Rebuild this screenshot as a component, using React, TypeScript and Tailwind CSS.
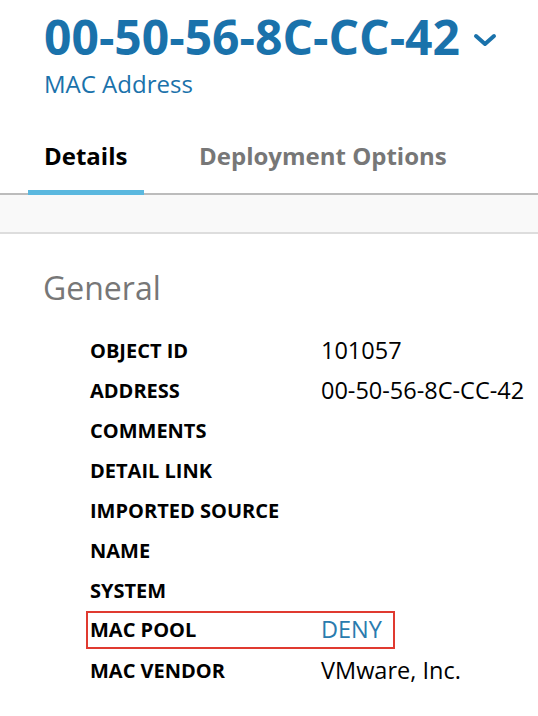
import React from 'react';

const rows: { label: string; value?: string; link?: boolean; highlight?: boolean }[] = [
  { label: 'OBJECT ID', value: '101057' },
  { label: 'ADDRESS', value: '00-50-56-8C-CC-42' },
  { label: 'COMMENTS' },
  { label: 'DETAIL LINK' },
  { label: 'IMPORTED SOURCE' },
  { label: 'NAME' },
  { label: 'SYSTEM' },
  { label: 'MAC POOL', value: 'DENY', link: true, highlight: true },
  { label: 'MAC VENDOR', value: 'VMware, Inc.' },
];

const App: React.FC = () => {
  return (
    <div className="w-[538px] h-[716px] bg-white overflow-hidden font-['Open_Sans',sans-serif]">
      <div className="pl-[44px] pt-[9px]">
        <div className="flex items-center whitespace-nowrap">
          <h1 className="text-[48px] leading-[56px] font-bold text-[#1a72ab]">00-50-56-8C-CC-42</h1>
          <svg className="ml-[13px] mt-[5px]" width="24" height="14" viewBox="0 0 24 14">
            <path d="M3 3 L12 11 L21 3" fill="none" stroke="#1a72ab" strokeWidth="4" strokeLinecap="round" strokeLinejoin="round" />
          </svg>
        </div>
        <div className="mt-[4px] text-[24px] leading-[30px] text-[#1a72ab]">MAC Address</div>
      </div>

      <div className="mt-[42px] flex border-b-2 border-[#bcbcbc]">
        <div className="ml-[28px] w-[116px] flex flex-col">
          <span className="pl-[16px] text-[24px] leading-[30px] font-bold text-black whitespace-nowrap">Details</span>
          <div className="mt-[19px] h-[5px] w-full bg-[#5bb8df] -mb-[2px]" />
        </div>
        <span className="ml-[55px] text-[24px] leading-[30px] font-bold text-[#777777] whitespace-nowrap">Deployment Options</span>
      </div>
      <div className="h-[39px] bg-[#f9f9f9] border-b-2 border-[#dddddd]" />

      <div className="pl-[43px] pt-[34px]">
        <h2 className="text-[32px] leading-[40px] text-[#777777]">General</h2>
        <div className="mt-[23px] flex flex-col">
          {rows.map(r =>
            r.highlight ? (
              <div key={r.label} className="h-[40px] pl-[43px]">
                <div className="flex items-center h-[38px] w-[309px] border-2 border-[#e03a30] pl-[2px]">
                  <span className="w-[231px] text-[20px] font-bold text-black whitespace-nowrap">{r.label}</span>
                  <span className="text-[23.5px] text-[#2a7bae]">{r.value}</span>
                </div>
              </div>
            ) : (
              <div key={r.label} className="flex items-center h-[40px] pl-[47px]">
                <span className="w-[231px] text-[20px] font-bold text-black whitespace-nowrap">{r.label}</span>
                {r.value && <span className="text-[23.5px] text-black whitespace-nowrap">{r.value}</span>}
              </div>
            )
          )}
        </div>
      </div>
    </div>
  );
};

export default App;
